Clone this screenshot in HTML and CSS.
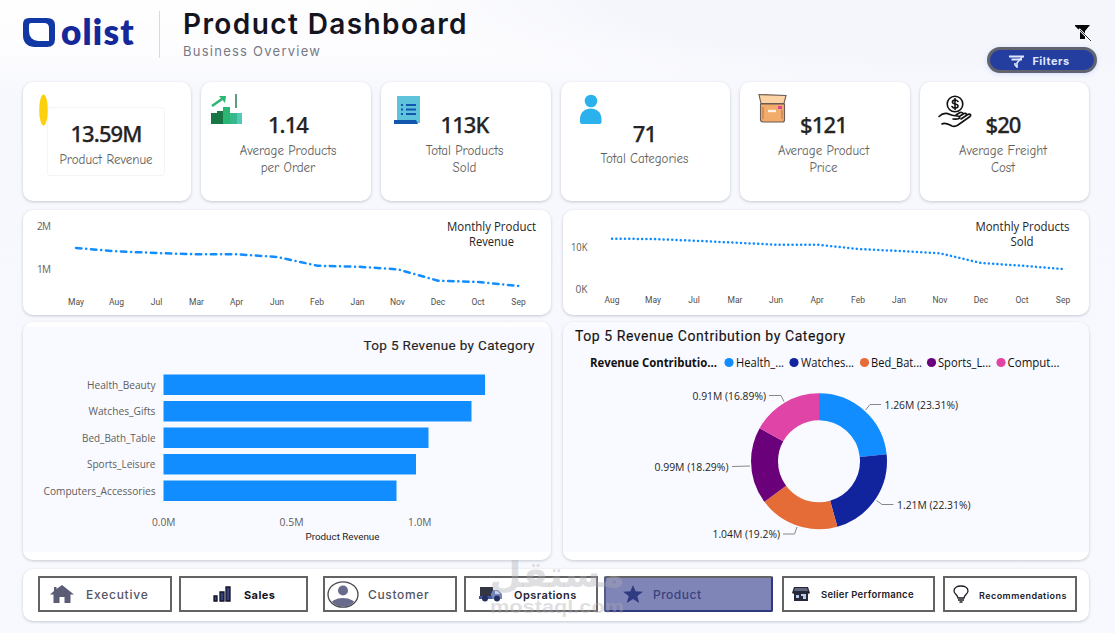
FILE: index.html
```html
<!DOCTYPE html>
<html lang="en">
<head>
<meta charset="utf-8">
<title>Product Dashboard</title>
<link rel="stylesheet" href="styles.css">
</head>
<body>
<div class="page">
  <header class="header">
    <div class="brand">
      <svg class="brand-mark" viewBox="0 0 32 29" width="32" height="29"><path d="M6 0H24Q32 0 32 7V21Q32 29 24 29H11Q0 28 0 17V6Q0 0 6 0Z" fill="#1238a6"/><path d="M8 5H21Q26 5 26 10V23H15Q6 22 6 13V7Q6 5 8 5Z" fill="#fff"/></svg>
      <span class="brand-name">olist</span>
    </div>
    <div class="heading">
      <h1 class="title">Product Dashboard</h1>
      <p class="subtitle">Business Overview</p>
    </div>
    <div class="tools">
      <svg class="clear-icon" viewBox="0 0 18 18" width="18" height="18"><path d="M1 1H16L11 7V15H6V7L1 2Z" fill="#050505"/><path d="M5 5L17 17" stroke="#fff" stroke-width="2.2"/><path d="M6 6L17 17" stroke="#333" stroke-width="1"/></svg>
      <button class="filters"><svg viewBox="0 0 16 13" width="16" height="13" fill="none" stroke="#dfe7ff"><path d="M0 1.5H15M2.5 4.5H13" stroke-width="2"/><path d="M13 2L8 8V12L6 10V8" stroke-width="1.6"/></svg><span>Filters</span></button>
    </div>
  </header>

  <section class="kpis">
    <article class="card kpi kpi-revenue">
      <svg class="kpi-icon" viewBox="0 0 36 36" width="36" height="36"><ellipse cx="8.5" cy="17" rx="4.3" ry="15.5" fill="#fdd00d"/></svg>
      <div class="kpi-frame"><strong>13.59M</strong><span>Product Revenue</span></div>
    </article>
    <article class="card kpi kpi-order">
      <svg class="kpi-icon" viewBox="0 0 36 36" width="36" height="36"><path d="M0 20H6V18H12V31H0Z" fill="#187545"/><path d="M12 14H19V31H12Z" fill="#2bb673"/><path d="M19 20H31V31H19Z" fill="#35b98a"/><path d="M26 20H31V31H26Z" fill="#55c9b7"/><path d="M1 13L11 6" stroke="#2bb673" stroke-width="2.6"/><path d="M8 3L15 3L14 10Z" fill="#2bb673"/><path d="M25 1V15" stroke="#37845e" stroke-width="1.6"/></svg>
      <div class="kpi-text"><strong>1.14</strong><span>Average Products<br>per Order</span></div>
    </article>
    <article class="card kpi kpi-sold">
      <svg class="kpi-icon" viewBox="0 0 36 36" width="36" height="36"><path d="M3 3H26V30H3Z" fill="#5fc3dc"/><path d="M0 27H22L24 31H0Z" fill="#1256ad"/><path d="M7 12H9M12 12H22M7 16.5H9M12 16.5H22M7 21H9M12 21H22" stroke="#1256ad" stroke-width="2.2"/></svg>
      <div class="kpi-text"><strong>113K</strong><span>Total Products<br>Sold</span></div>
    </article>
    <article class="card kpi kpi-categories">
      <svg class="kpi-icon" viewBox="0 0 36 36" width="36" height="36" fill="#2bb2ec"><circle cx="11" cy="8" r="6.3"/><path d="M0 29V26C0 12 21.5 12 21.5 26V29Q21.5 31 19.5 31H2Q0 31 0 29Z"/></svg>
      <div class="kpi-text"><strong>71</strong><span>Total Categories</span></div>
    </article>
    <article class="card kpi kpi-price">
      <svg class="kpi-icon" viewBox="0 0 36 36" width="36" height="36" stroke="#6b5b53" stroke-width="1.1"><path d="M1 1.500L28 2.500L26 10.500H3Z" fill="#fbd3a4"/><path d="M2.500 11H26.500V27Q26.500 29 24.500 29H5Q2.500 29 2.500 26Z" fill="#f2ab6a"/><path d="M5 14V26M24 17V26" fill="none" stroke="#b97d50"/><path d="M10 18H18" stroke="#fff3e2" stroke-width="2.400"/><path d="M20 14.500H24" stroke="#e0439a" stroke-width="3"/></svg>
      <div class="kpi-text"><strong>$121</strong><span>Average Product<br>Price</span></div>
    </article>
    <article class="card kpi kpi-freight">
      <svg class="kpi-icon" viewBox="0 0 36 36" width="36" height="36" fill="none" stroke="#111" stroke-width="1.6" stroke-linecap="round" stroke-linejoin="round"><circle cx="17" cy="9" r="7.800"/><path d="M20 6.500C18 4 14 5 14.500 7.500C15 9.500 20 8.500 20 11C20 13.500 15.500 14 14 11.500M17 3.500V14.500"/><path d="M1 21.500C5 17.500 8 17.500 12 19.500C15 21 18 20.500 21 21.500C23 23 21 24.500 15 24"/><path d="M4 29C7 27 10 29 14 31Q17 32 20 30L32 21.500C34 19 31 18.500 29 20L23 24M22 21L26 18.500Q29 17.500 28 20M18 20L22 17.500Q25 17 25 19"/></svg>
      <div class="kpi-text"><strong>$20</strong><span>Average Freight<br>Cost</span></div>
    </article>
  </section>

  <section class="row trends">
    <article class="card">
      <svg class="chart" viewBox="23 210 528 105" width="528" height="105">
        <g class="ytick"><text x="37" y="230" textLength="14">2M</text><text x="37" y="273" textLength="14">1M</text></g>
        <polyline class="line dashdot" points="76,248 116.200,251.300 156.500,253 196.700,254.300 236.900,254.300 277,257 317.400,265.700 357.600,266.700 397.800,269.300 438,280.700 478.300,282 518.500,286"/>
        <g class="tick"><text x="76" y="305">May</text><text x="116.500" y="305">Aug</text><text x="156.500" y="305">Jul</text><text x="196.500" y="305">Mar</text><text x="236.500" y="305">Apr</text><text x="277" y="305">Jun</text><text x="317" y="305">Feb</text><text x="357.500" y="305">Jan</text><text x="397.500" y="305">Nov</text><text x="438" y="305">Dec</text><text x="478" y="305">Oct</text><text x="518.500" y="305">Sep</text></g>
        <g class="trend-title"><text x="491.500" y="231" textLength="89" lengthAdjust="spacingAndGlyphs">Monthly Product</text><text x="491.500" y="246" textLength="45" lengthAdjust="spacingAndGlyphs">Revenue</text></g>
      </svg>
    </article>
    <article class="card">
      <svg class="chart" viewBox="563 210 526 105" width="526" height="105">
        <g class="ytick"><text x="571" y="251" textLength="16.500" lengthAdjust="spacingAndGlyphs">10K</text><text x="575.500" y="293" textLength="12" lengthAdjust="spacingAndGlyphs">0K</text></g>
        <polyline class="line dotted" points="612,238.700 653,239 694,240.700 735,242.700 776,244.700 817,244.700 858,249 899,251 940,253.300 981,263 1021.500,265.700 1062,269"/>
        <g class="tick"><text x="612" y="303">Aug</text><text x="653" y="303">May</text><text x="694" y="303">Jul</text><text x="735" y="303">Mar</text><text x="776" y="303">Jun</text><text x="817" y="303">Apr</text><text x="858" y="303">Feb</text><text x="899" y="303">Jan</text><text x="940" y="303">Nov</text><text x="981" y="303">Dec</text><text x="1022" y="303">Oct</text><text x="1063" y="303">Sep</text></g>
        <g class="trend-title"><text x="1022.500" y="231" textLength="94" lengthAdjust="spacingAndGlyphs">Monthly Products</text><text x="1022" y="246" textLength="23" lengthAdjust="spacingAndGlyphs">Sold</text></g>
      </svg>
    </article>
  </section>

  <section class="row details">
    <article class="card tinted">
      <svg class="chart" viewBox="23 322 528 238" width="528" height="238">
        <text class="panel-title" x="363.500" y="350" textLength="171" lengthAdjust="spacing">Top 5 Revenue by Category</text>
        <g class="bars"><rect x="163.500" y="374.500" width="321.500" height="20.500"/><rect x="163.500" y="401" width="308" height="20.500"/><rect x="163.500" y="427.500" width="265" height="20.500"/><rect x="163.500" y="454" width="252.500" height="20.500"/><rect x="163.500" y="480.500" width="233" height="20.500"/></g>
        <g class="label"><text x="87" y="389" textLength="68.500" lengthAdjust="spacingAndGlyphs">Health_Beauty</text><text x="88.500" y="415" textLength="67" lengthAdjust="spacingAndGlyphs">Watches_Gifts</text><text x="82" y="442" textLength="73.500" lengthAdjust="spacingAndGlyphs">Bed_Bath_Table</text><text x="87" y="468" textLength="68.500" lengthAdjust="spacingAndGlyphs">Sports_Leisure</text><text x="43.500" y="495" textLength="112" lengthAdjust="spacingAndGlyphs">Computers_Accessories</text><text x="152" y="526" textLength="23.500" lengthAdjust="spacingAndGlyphs">0.0M</text><text x="279.500" y="526" textLength="24" lengthAdjust="spacingAndGlyphs">0.5M</text><text x="408" y="526" textLength="23.500" lengthAdjust="spacingAndGlyphs">1.0M</text></g>
        <text class="axis-title" x="305.500" y="540" textLength="74" lengthAdjust="spacingAndGlyphs">Product Revenue</text>
      </svg>
    </article>
    <article class="card tinted flush">
      <svg class="chart" viewBox="563 322 526 238" width="526" height="238">
        <text class="panel-title dark" x="575" y="341" textLength="270" lengthAdjust="spacing">Top 5 Revenue Contribution by Category</text>
        <g class="legend"><text class="strong" x="590" y="367" textLength="127" lengthAdjust="spacingAndGlyphs">Revenue Contributio...</text>
          <circle cx="729" cy="362.500" r="4.600" fill="#118dff"/><text x="736" y="367" textLength="48" lengthAdjust="spacingAndGlyphs">Health_...</text>
          <circle cx="794" cy="362.500" r="4.600" fill="#12239e"/><text x="801" y="367" textLength="53" lengthAdjust="spacingAndGlyphs">Watches...</text>
          <circle cx="864.500" cy="362.500" r="4.600" fill="#e66c37"/><text x="871" y="367" textLength="51" lengthAdjust="spacingAndGlyphs">Bed_Bat...</text>
          <circle cx="931.500" cy="362.500" r="4.600" fill="#6b007b"/><text x="938" y="367" textLength="53" lengthAdjust="spacingAndGlyphs">Sports_L...</text>
          <circle cx="1001" cy="362.500" r="4.600" fill="#e044a7"/><text x="1007.500" y="367" textLength="52" lengthAdjust="spacingAndGlyphs">Comput...</text></g>
        <g class="donut" transform="rotate(-90 819 461.300)">
          <circle cx="819" cy="461.300" r="54.500" pathLength="100" stroke="#118dff" stroke-dasharray="23.310 76.690"/>
          <circle cx="819" cy="461.300" r="54.500" pathLength="100" stroke="#12239e" stroke-dasharray="22.310 77.690" stroke-dashoffset="-23.310"/>
          <circle cx="819" cy="461.300" r="54.500" pathLength="100" stroke="#e66c37" stroke-dasharray="19.200 80.800" stroke-dashoffset="-45.620"/>
          <circle cx="819" cy="461.300" r="54.500" pathLength="100" stroke="#6b007b" stroke-dasharray="18.290 81.710" stroke-dashoffset="-64.820"/>
          <circle cx="819" cy="461.300" r="54.500" pathLength="100" stroke="#e044a7" stroke-dasharray="16.890 83.110" stroke-dashoffset="-83.110"/>
        </g>
        <path class="leader" d="M865.500 410L870 404.500H881M876.500 500.500L882 504.500H893.500M797 527L794.500 534H783M750 466L732 466.500M784 401.500L781 395.500H769"/>
        <g class="value"><text x="884.500" y="409" textLength="73.500" lengthAdjust="spacingAndGlyphs">1.26M (23.31%)</text><text x="897" y="509" textLength="73.500" lengthAdjust="spacingAndGlyphs">1.21M (22.31%)</text><text x="712.500" y="538" textLength="67.500" lengthAdjust="spacingAndGlyphs">1.04M (19.2%)</text><text x="654.500" y="471" textLength="74" lengthAdjust="spacingAndGlyphs">0.99M (18.29%)</text><text x="692.500" y="400" textLength="73.500" lengthAdjust="spacingAndGlyphs">0.91M (16.89%)</text></g>
      </svg>
    </article>
  </section>

  <nav class="card nav">
    <a class="tab executive"><svg viewBox="0 0 24 18" width="24" height="18"><path d="M12 0L24 9.500H20.500V18H14.500V12H9.500V18H3.500V9.500H0L4 6V2H6.500V4Z" fill="#5b5d76"/></svg><span>Executive</span></a>
    <a class="tab sales"><svg viewBox="0 0 18 16" width="18" height="16"><path d="M1 10H4V15H1ZM7 6H11V15H7ZM13 1H17V15H13Z" fill="#35427d" stroke="#101224" stroke-width="1.300"/></svg><span>Sales</span></a>
    <a class="tab customer"><svg viewBox="0 0 32 27" width="32" height="27"><defs><clipPath id="avatar"><ellipse cx="16" cy="13.500" rx="14" ry="12"/></clipPath></defs><g fill="#696b8c" clip-path="url(#avatar)"><circle cx="16" cy="9.500" r="5"/><ellipse cx="16" cy="25" rx="13" ry="8"/></g><ellipse cx="16" cy="13.500" rx="15" ry="12.700" fill="none" stroke="#45464f" stroke-width="1.300"/></svg><span>Customer</span></a>
    <a class="tab operations"><svg viewBox="0 0 24 16" width="24" height="16"><path d="M1 1H14V12H1Z" fill="#333743"/><path d="M14 4H19L23 8V13H12V8Z" fill="#7386b7"/><path d="M16 5H18.500L21 8H16Z" fill="#c3d3ef"/><path d="M0 10H13V13H0Z" fill="#4557a2"/><circle cx="6" cy="12.500" r="3" fill="#24305f"/><circle cx="18" cy="12.500" r="3" fill="#24305f"/></svg><span>Opsrations</span></a>
    <a class="tab product"><svg viewBox="0 0 20 18" width="20" height="18"><path d="M10 0L12.600 6.300L20 6.800L14.300 11L16.200 18L10 14L3.800 18L5.700 11L0 6.800L7.400 6.300Z" fill="#2f3a80"/></svg><span>Product</span></a>
    <a class="tab seller"><svg viewBox="0 0 18 16" width="18" height="16"><path d="M2 1H16L18 7L16 8V15H2V8L0 7Z" fill="#25283a"/><path d="M3 2H15L16 5H2Z" fill="#62667a"/><path d="M4 9H7V12H4ZM9 8H14V13H11V10H9Z" fill="#b9cbed"/></svg><span>Selier Performance</span></a>
    <a class="tab tips"><svg viewBox="0 0 16 18" width="16" height="18" fill="none" stroke="#1b1b25" stroke-width="1.300"><path d="M5 13C5 10 1 9 1 6C1 2.500 4 1 8 1C12 1 15 3 15 6C15 9 11 10 11 13ZM5 15H11M6.500 17H9.500"/></svg><span>Recommendations</span></a>
  </nav>

  <svg class="watermark" viewBox="0 0 140 64" width="140" height="64">
    <text class="wm-ar" x="70" y="31" direction="rtl" textLength="135" lengthAdjust="spacingAndGlyphs">مستقل</text>
    <text class="wm-en" x="70" y="57" textLength="134" lengthAdjust="spacingAndGlyphs">mostaql.com</text>
  </svg>
</div>
</body>
</html>
```
FILE: styles.css
```css
* { box-sizing: border-box; }
body { margin: 0; font-family: "Open Sans", "Noto Sans", sans-serif; }
.page {
  position: relative; width: 1115px; height: 633px; overflow: hidden;
  padding: 0 26px 0 23px; display: flex; flex-direction: column;
  background:
    radial-gradient(ellipse 640px 100px at 1000px 0, #f5f6fc 0 60%, rgba(245,246,252,0) 100%),
    linear-gradient(180deg, #fefefe 0, #fdfdff 50px, #f7f8fd 90px, #f8f9fe 100%);
}
.header { height: 82px; flex: none; display: flex; align-items: flex-start; }
.brand { width: 137px; height: 47px; margin-top: 11px; padding-top: 7px; display: flex; gap: 6px; border-right: 1px solid #d9dae0; }
.brand-mark { flex: none; }
.brand-name { font: 800 35px/26px Lato, sans-serif; letter-spacing: 1.2px; color: #14289a; }
.heading { margin: 9px 0 0 23px; }
.title { margin: 0; font: 600 28px/30px Inter, sans-serif; letter-spacing: 1.4px; color: #15151f; white-space: nowrap; }
.subtitle { margin: 5px 0 0; font: 400 13px/15px Inter, sans-serif; letter-spacing: 1.25px; color: #777985; }
.tools { margin: 24px -8px 0 auto; display: flex; flex-direction: column; align-items: flex-end; gap: 5px; }
.clear-icon { margin-right: 5px; }
.filters {
  width: 110px; height: 26px; padding: 2px 5px 0 0; border: 3px solid #61646e; border-radius: 14px;
  display: flex; align-items: center; justify-content: center; gap: 7px;
  background: #243ea0; color: #dfe7ff; font: 700 11px Inter, sans-serif; letter-spacing: 0.5px; box-shadow: 0 1px 5px #cfdcff;
}
.card { background: #fff; border-radius: 10px; box-shadow: 0 1px 3px rgba(70,75,100,0.28); }
.kpis { height: 119px; flex: none; display: grid; grid-template-columns: 168px 170px 170px 169px 170px 169px; justify-content: space-between; }
.kpi { position: relative; display: flex; align-items: center; justify-content: center; }
.kpi-icon { position: absolute; left: 12px; top: 11px; }
.kpi-order .kpi-icon { left: 10px; }
.kpi-sold .kpi-icon { left: 13px; }
.kpi-categories .kpi-icon { left: 19px; }
.kpi-price .kpi-icon { left: 18px; }
.kpi-freight .kpi-icon { left: 18px; top: 13px; }
.kpi-frame, .kpi-text { display: flex; flex-direction: column; align-items: center; text-align: center; }
.kpi-frame { width: 118px; height: 69px; padding-top: 9px; margin-right: 2px; border: 1px solid #f3f4f6; border-radius: 3px; }
.kpi-order .kpi-text { margin-left: 4px; }
.kpi-sold .kpi-text { margin-right: 3px; }
.kpi-categories .kpi-text { margin-right: 2px; }
.kpi-price .kpi-text, .kpi-freight .kpi-text { margin-right: 3px; }
.kpi strong { font: 500 22px/33px "Noto Sans", sans-serif; letter-spacing: -0.9px; color: #252423; -webkit-text-stroke: 0.25px #252423; }
.kpi span { position: relative; top: 0.6px; font: 400 13px/17px "Comic Neue", "Comic Sans MS", Lato, sans-serif; letter-spacing: 0; color: #605e5c; white-space: nowrap; }
.row { flex: none; display: grid; grid-template-columns: 528px 526px; justify-content: space-between; }
.trends { margin-top: 9px; height: 105px; }
.details { margin-top: 7px; height: 238px; }
.tinted { background: linear-gradient(#fff 0 5px, #f9faff 5px 230px, #fff 230px); }
.flush { background: linear-gradient(#f9faff 0 230px, #fff 230px); }
.chart { display: block; }
.chart text { font-family: "Open Sans", sans-serif; }
.line { fill: none; stroke: #118dff; stroke-width: 2.5; stroke-linejoin: round; stroke-linecap: round; }
.dashdot { stroke-dasharray: 5.5 4.7 0.1 4.7; }
.dotted { stroke-dasharray: 0.1 4.2; }
.chart .ytick text { font-size: 10px; fill: #605e5c; }
.chart .tick text { font: 400 8.5px Roboto, sans-serif; fill: #504e4c; text-anchor: middle; }
.chart .trend-title text { font-size: 12px; fill: #252423; text-anchor: middle; }
.chart .panel-title { font: 400 13.5px Roboto, sans-serif; fill: #252423; stroke: #252423; stroke-width: 0.15px; }
.chart .panel-title.dark { font-size: 14px; fill: #111; }
.bars rect { fill: #118dff; }
.chart .label text { font-size: 10.5px; fill: #605e5c; }
.chart .axis-title { font: 400 9.5px Roboto, sans-serif; fill: #252423; }
.chart .legend text { font-size: 12px; fill: #111; }
.chart .legend .strong { font-weight: 700; }
.chart .value text { font-size: 11px; fill: #252423; }
.donut circle { fill: none; stroke-width: 27; }
.leader { fill: none; stroke: #8a8886; stroke-width: 1; }
.nav { flex: none; width: 1066px; height: 52px; margin-top: 9px; padding: 7px 0 0 15px; display: flex; }
.tab {
  height: 36px; flex: none; display: flex; align-items: center; border: 2.5px solid #636363;
  font: 500 12px/1 Inter, sans-serif; color: #555663; white-space: nowrap;
}
.tab span { padding-top: 2px; }
.executive { width: 134px; padding-left: 10px; gap: 12px; letter-spacing: 0.75px; }
.sales { width: 129px; margin-left: 7px; padding-left: 32px; gap: 13px; font-size: 11px; font-weight: 700; letter-spacing: 0.4px; color: #151523; }
.customer { width: 134px; margin-left: 15px; padding-left: 2px; gap: 9px; letter-spacing: 0.65px; }
.operations { width: 134px; margin-left: 7px; padding-left: 13px; gap: 11px; font-size: 11px; font-weight: 600; letter-spacing: 0.45px; color: #252533; }
.product { width: 169px; margin-left: 6px; padding-left: 17px; gap: 10px; background: #8085b8; border-color: #636363 #30397d #30397d #555b83; border-radius: 2px; color: #39417f; letter-spacing: 0.5px; }
.seller { width: 153px; margin-left: 9px; padding-left: 8px; gap: 11px; font-size: 9.5px; font-weight: 600; letter-spacing: 0.25px; color: #20202a; }
.tips { width: 134px; margin-left: 8px; padding-left: 8px; gap: 10px; font-size: 9px; font-weight: 600; letter-spacing: 0.45px; color: #20202a; }
.watermark { position: absolute; left: 487px; top: 556px; pointer-events: none; fill: rgba(172,172,180,0.38); }
.watermark text { text-anchor: middle; }
.wm-ar { font: 700 36px "DejaVu Sans", sans-serif; }
.wm-en { font: 700 18px "Liberation Sans", sans-serif; }
```
